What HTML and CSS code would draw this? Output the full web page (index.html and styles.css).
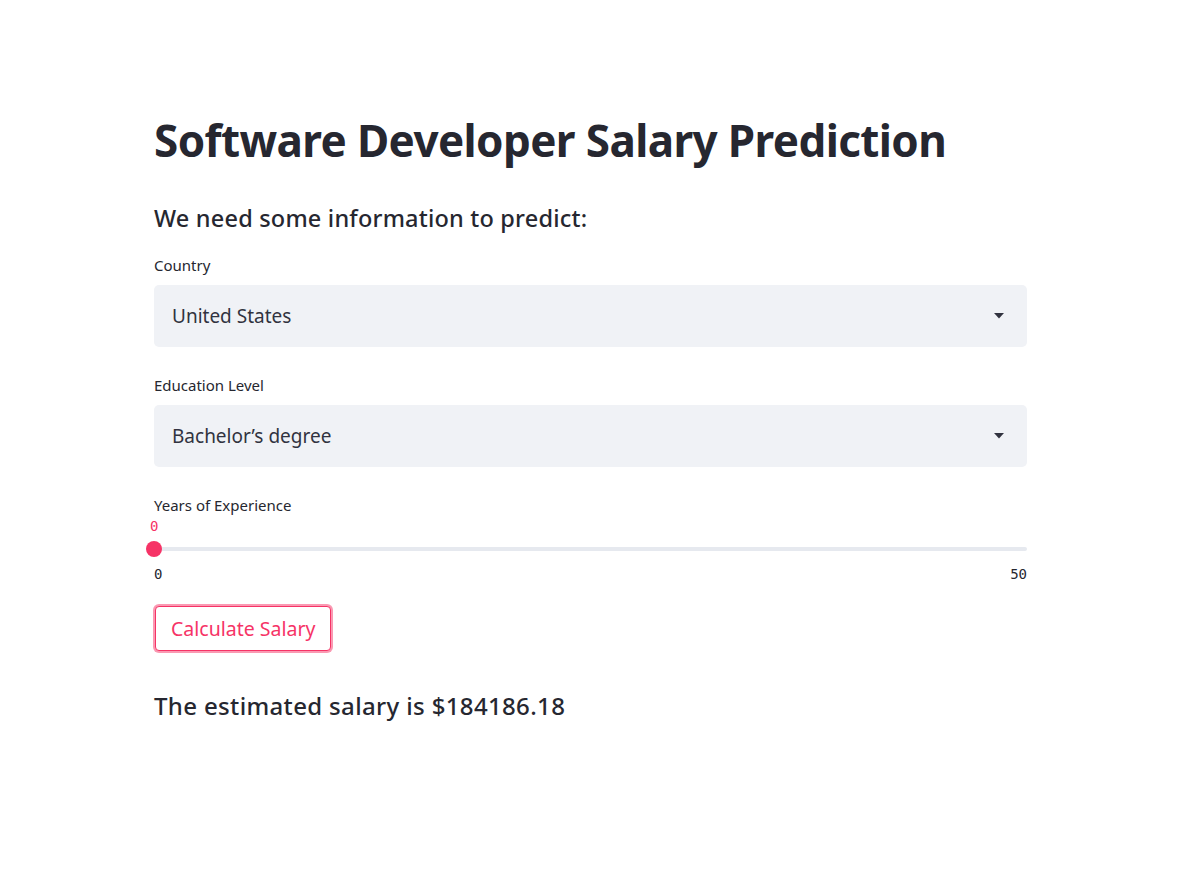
FILE: index.html
```html
<!DOCTYPE html>
<html>
<head>
<meta charset="utf-8">
<link rel="stylesheet" href="styles.css">
</head>
<body>
<main class="block">
  <h1 class="title">Software Developer Salary Prediction</h1>
  <h3 class="subheader">We need some information to predict:</h3>

  <div class="field">
    <label class="label">Country</label>
    <div class="select">
      <span class="select-value">United States</span>
      <svg class="caret" width="10" height="6" viewBox="0 0 10 6"><path d="M0 0h10L5 5.5z" fill="#31333f"/></svg>
    </div>
  </div>

  <div class="field">
    <label class="label">Education Level</label>
    <div class="select">
      <span class="select-value">Bachelor’s degree</span>
      <svg class="caret" width="10" height="6" viewBox="0 0 10 6"><path d="M0 0h10L5 5.5z" fill="#31333f"/></svg>
    </div>
  </div>

  <div class="field slider-field">
    <label class="label">Years of Experience</label>
    <div class="slider">
      <div class="track">
        <div class="thumb"><span class="thumb-value">0</span></div>
      </div>
      <div class="ticks"><span>0</span><span>50</span></div>
    </div>
  </div>

  <button class="btn">Calculate Salary</button>

  <h3 class="result">The estimated salary is $184186.18</h3>
</main>
</body>
</html>
```

FILE: styles.css
```css
* { box-sizing: border-box; }
body {
  margin: 0;
  background: #fff;
  font-family: "Noto Sans", "Open Sans", sans-serif;
  color: #262730;
}
.block {
  width: 873px;
  margin-left: 154px;
  padding-top: 106px;
}
.title {
  margin: 0;
  font-size: 44px;
  font-weight: 700;
  line-height: 68px;
  color: #262730;
  letter-spacing: -0.6px;
}
.subheader {
  margin: 28px 0 0;
  font-size: 23.5px;
  font-weight: 500;
  line-height: 32px;
  letter-spacing: 0.2px;
  color: #262730;
}
.field { margin-top: 21px; }
.field + .field { margin-top: 28px; }
.label {
  display: block;
  font-size: 15px;
  line-height: 20px;
  color: #262730;
  margin-bottom: 10px;
}
.select {
  height: 62px;
  background: #f0f2f6;
  border-radius: 5px;
  display: flex;
  align-items: center;
  justify-content: space-between;
  padding: 0 23px 0 18px;
}
.select-value {
  font-size: 19px;
  color: #31333f;
}
.caret { display: block; }
.slider-field .label { margin-bottom: 0; }
.slider { padding-top: 32px; }
.track {
  position: relative;
  height: 4px;
  background: #e6e9ef;
  border-radius: 2px;
}
.thumb {
  position: absolute;
  left: -8px;
  top: -6px;
  width: 16px;
  height: 16px;
  border-radius: 50%;
  background: #f63366;
}
.thumb-value {
  position: absolute;
  left: 4px;
  top: -24px;
  font-family: "DejaVu Sans Mono", monospace;
  font-size: 14px;
  line-height: 18px;
  color: #f63366;
}
.ticks {
  display: flex;
  justify-content: space-between;
  margin-top: 14px;
  font-family: "DejaVu Sans Mono", monospace;
  font-size: 14px;
  line-height: 18px;
  color: #262730;
}
.btn {
  display: block;
  margin: 23px 0 0 1px;
  height: 45px;
  padding: 0 15px;
  background: #fff;
  border: 1px solid #f63366;
  border-radius: 4px;
  box-shadow: 0 0 0 2px rgba(246, 51, 102, 0.5);
  font-family: inherit;
  font-size: 19.5px;
  color: #f63366;
}
.result {
  margin: 39px 0 0;
  font-size: 24px;
  font-weight: 500;
  line-height: 32px;
  letter-spacing: 0.35px;
  color: #262730;
}
```
